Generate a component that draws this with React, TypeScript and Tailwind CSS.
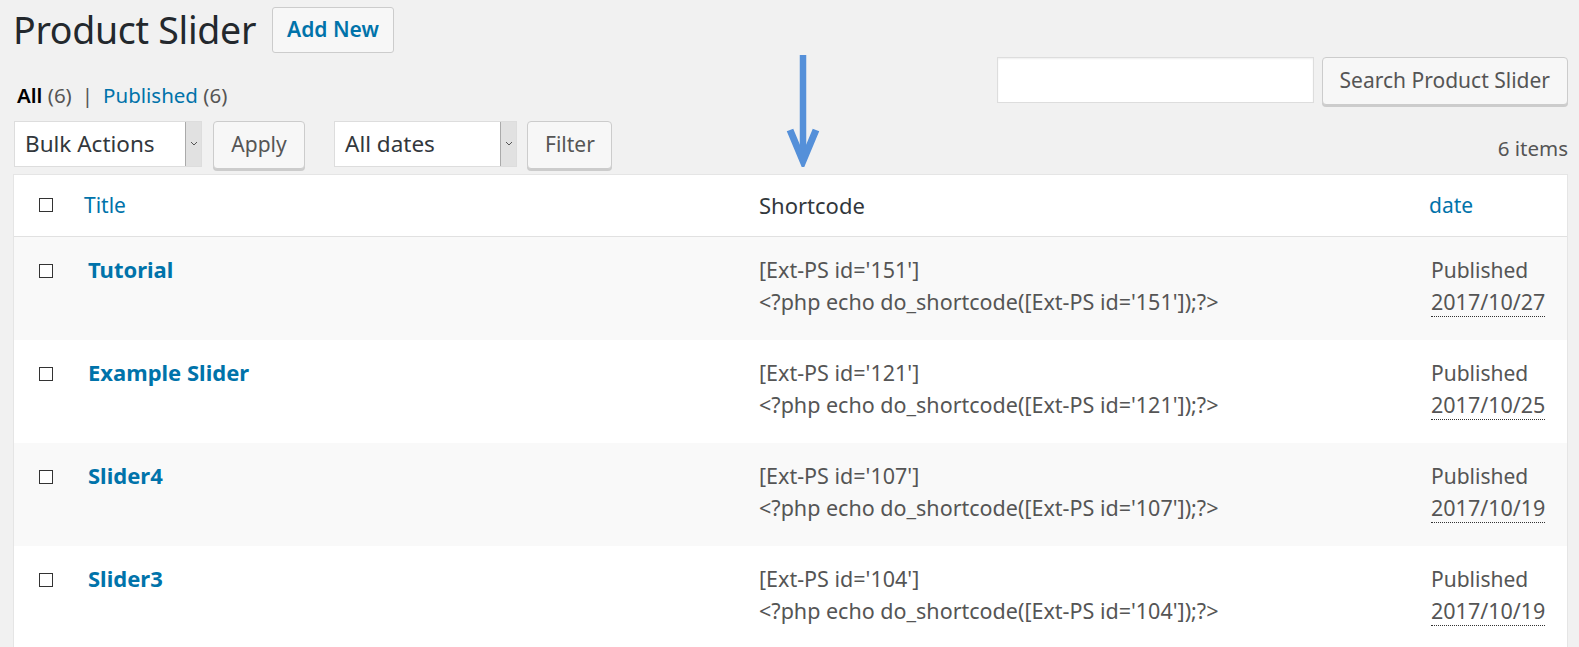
import React from 'react';

const rows = [
  { title: 'Tutorial', id: '151', date: '2017/10/27' },
  { title: 'Example Slider', id: '121', date: '2017/10/25' },
  { title: 'Slider4', id: '107', date: '2017/10/19' },
  { title: 'Slider3', id: '104', date: '2017/10/19' },
];

const Check = () => (
  <span className="block w-[14px] h-[14px] border-[1.5px] border-[#333] bg-white" />
);

const Select = ({ label, w }: { label: string; w: string }) => (
  <div className={`flex h-[46px] ${w} border border-[#ddd] bg-white`}>
    <span className="flex-1 flex items-center pl-[10px] text-[22.5px] text-[#32373c]">{label}</span>
    <span className="w-[16px] flex items-center justify-center bg-[#e1e1e1] border-l border-[#aaa]">
      <svg width="8" height="5" viewBox="0 0 8 5">
        <path d="M1 1l3 3 3-3" fill="none" stroke="#555" strokeWidth="1" />
      </svg>
    </span>
  </div>
);

const Btn = ({ children, cls = '' }: { children: React.ReactNode; cls?: string }) => (
  <button
    className={`h-[48px] px-[17px] rounded-[4px] border border-[#ccc] bg-[#f7f7f7] shadow-[0_2px_0_#ccc] text-[21px] text-[#555] ${cls}`}
  >
    {children}
  </button>
);

export default function App() {
  return (
    <div
      className="relative w-full h-screen overflow-hidden bg-[#f1f1f1] text-[#444]"
      style={{ fontFamily: '"Segoe UI", "Noto Sans", sans-serif' }}
    >
      {/* annotation arrow */}
      <svg className="absolute left-[786px] top-[55px]" width="40" height="112" viewBox="0 0 40 112">
        <path d="M17 0v104" stroke="#5590d9" strokeWidth="6.5" fill="none" />
        <path d="M4 75l13 31 13-31" stroke="#5590d9" strokeWidth="7" fill="none" strokeLinejoin="miter" />
      </svg>

      <div className="pl-[13px] pr-[11px]">
        <div className="flex items-center gap-[16px] pt-[4px] h-[56px]">
          <h1 className="text-[37.5px] leading-none text-[#23282d] tracking-[-0.3px]">Product Slider</h1>
          <button className="h-[46px] px-[14px] rounded-[3px] border border-[#ccc] bg-[#f7f7f7] text-[21px] font-semibold text-[#0073aa]">
            Add New
          </button>
        </div>

        <div className="flex items-start justify-between">
          <div className="pt-[24px] pl-[4px] text-[20.5px]">
            <span className="font-semibold text-black">All</span>{' '}
            <span className="text-[#555]">(6)</span>
            <span className="text-[#555] mx-[10px]">|</span>
            <span className="text-[#0073aa]">Published</span>{' '}
            <span className="text-[#555]">(6)</span>
          </div>
          <div className="flex gap-[8px] pt-[1px]">
            <div className="w-[317px] h-[46px] border border-[#ddd] bg-white shadow-[inset_0_1px_2px_rgba(0,0,0,0.07)]" />
            <Btn cls="h-[47px] px-[17px]">Search Product Slider</Btn>
          </div>
        </div>

        <div className="flex items-start justify-between mt-[10px]">
          <div className="flex items-start">
            <div className="pl-[1px]">
              <Select label="Bulk Actions" w="w-[188px]" />
            </div>
            <Btn cls="ml-[11px] w-[92px]">Apply</Btn>
            <div className="ml-[29px]">
              <Select label="All dates" w="w-[183px]" />
            </div>
            <Btn cls="ml-[10px] w-[85px]">Filter</Btn>
          </div>
          <div className="pt-[12px] text-[20.5px] text-[#555]">6 items</div>
        </div>

        <div className="mt-[5px] border border-[#e5e5e5] bg-white">
          <div className="grid grid-cols-[70px_675px_670px_1fr] h-[62px] items-center border-b border-[#e1e1e1]">
            <div className="pl-[25px]"><Check /></div>
            <div className="text-[21px] text-[#0073aa]">Title</div>
            <div className="text-[22px] text-[#32373c]">Shortcode</div>
            <div className="text-[21px] text-[#0073aa]">date</div>
          </div>
          {rows.map((r, i) => (
            <div
              key={r.id}
              className={`grid grid-cols-[70px_675px_670px_1fr] h-[103px] ${i % 2 === 0 ? 'bg-[#f9f9f9]' : 'bg-white'}`}
            >
              <div className="pl-[25px] pt-[27px]"><Check /></div>
              <div className="pl-[4px] pt-[16px] text-[22px] font-bold text-[#0073aa]">{r.title}</div>
              <div className="pt-[17px] text-[21.5px] leading-[32px] text-[#555]">
                <div>[Ext-PS id='{r.id}']</div>
                <div>&lt;?php echo do_shortcode([Ext-PS id='{r.id}']);?&gt;</div>
              </div>
              <div className="pl-[2px] pt-[17px] text-[21px] leading-[32px] text-[#555]">
                <div>Published</div>
                <div className="inline border-b border-dotted border-[#333] leading-[26px] text-[21.5px]">{r.date}</div>
              </div>
            </div>
          ))}
        </div>
      </div>
    </div>
  );
}
